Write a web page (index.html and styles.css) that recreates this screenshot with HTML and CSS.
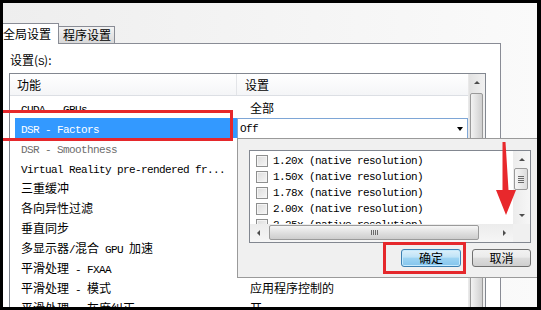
FILE: index.html
```html
<!DOCTYPE html>
<html lang="zh-CN">
<head>
  <meta charset="UTF-8">
  <link rel="stylesheet" href="styles.css">
  <title>管理 3D 设置</title>
</head>
<body>
  <div class="window">
    <div class="tabs">
      <div class="tab active">全局设置</div>
      <div class="tab">程序设置</div>
    </div>

    <div class="panel">
      <div class="field-label">设置(<span class="m">S</span>):</div>
      <div class="listbox">
        <div class="list-main">
          <div class="list-head">
            <div class="head-a">功能</div>
            <div class="head-b">设置</div>
          </div>
          <div class="rows">
            <div class="row"><div class="col-a"><span class="m">CUDA - GPUs</span></div><div class="col-b">全部</div></div>
            <div class="row selected">
              <div class="col-a"><span class="m">DSR - Factors</span></div>
              <div class="combo"><span class="m">Off</span><span class="combo-arrow"></span></div>
            </div>
            <div class="row muted"><div class="col-a"><span class="m">DSR - Smoothness</span></div><div class="col-b"></div></div>
            <div class="row"><div class="col-a"><span class="m">Virtual Reality pre-rendered fr...</span></div><div class="col-b"></div></div>
            <div class="row"><div class="col-a">三重缓冲</div><div class="col-b">关</div></div>
            <div class="row"><div class="col-a">各向异性过滤</div><div class="col-b">应用程序控制的</div></div>
            <div class="row"><div class="col-a">垂直同步</div><div class="col-b">使用 3D 应用程序设置</div></div>
            <div class="row"><div class="col-a">多显示器<span class="m">/</span>混合<span class="m"> GPU </span>加速</div><div class="col-b">多显示器性能模式</div></div>
            <div class="row"><div class="col-a">平滑处理<span class="m"> - FXAA</span></div><div class="col-b">关</div></div>
            <div class="row"><div class="col-a">平滑处理<span class="m"> - </span>模式</div><div class="col-b">应用程序控制的</div></div>
            <div class="row"><div class="col-a">平滑处理<span class="m"> - </span>灰度纠正</div><div class="col-b">开</div></div>
          </div>
        </div>
        <div class="vscroll">
          <div class="sb-btn"><span class="tri up"></span></div>
          <div class="sb-thumb"></div>
        </div>
      </div>
    </div>

    <div class="popup">
      <div class="check-list">
        <div class="items">
          <label class="item"><span class="box"></span><span class="m">1.20x (native resolution)</span></label>
          <label class="item"><span class="box"></span><span class="m">1.50x (native resolution)</span></label>
          <label class="item"><span class="box"></span><span class="m">1.78x (native resolution)</span></label>
          <label class="item"><span class="box"></span><span class="m">2.00x (native resolution)</span></label>
          <label class="item"><span class="box"></span><span class="m">2.25x (native resolution)</span></label>
        </div>
        <div class="vbar">
          <div class="sb-btn"><span class="tri up"></span></div>
          <div class="vbar-track"><div class="vbar-thumb"><span class="grip-h"></span></div></div>
          <div class="sb-btn"><span class="tri down"></span></div>
        </div>
        <div class="hbar">
          <div class="hbar-btn"><span class="tri left"></span></div>
          <div class="hbar-thumb"><span class="grip-v"></span></div>
          <div class="hbar-btn"><span class="tri right"></span></div>
        </div>
        <div class="corner"></div>
      </div>
      <div class="buttons">
        <button class="btn btn-default">确定</button>
        <button class="btn">取消</button>
      </div>
    </div>

    <div class="mark mark-row"></div>
    <div class="mark mark-ok"></div>
    <svg class="arrow" width="26" height="78" viewBox="0 0 26 78">
      <polygon points="9.5,2 12.5,2 15.5,50 23,50 13,75 3,50 9.5,50" fill="#e8282c"/>
    </svg>
  </div>
</body>
</html>
```

FILE: styles.css
```css
body {
  margin: 0;
  width: 541px;
  height: 310px;
  overflow: hidden;
  background-color: #000;
}

.window {
  position: relative;
  margin: 3px 4px 0 3px;
  height: 304px;
  overflow: hidden;
  display: flex;
  flex-direction: column;
  background: linear-gradient(to right, #eeeeee, #fafafa);
  font-family: "Noto Sans CJK SC", sans-serif;
  font-size: 12px;
  color: #000;
}

/* Latin text in the old bitmap style: 6px per char */
.m {
  font-family: "Liberation Mono", monospace;
  font-size: 11px;
  letter-spacing: -0.6px;
  white-space: pre;
}

.tabs {
  display: flex;
  align-items: flex-end;
  height: 40px;
  flex-shrink: 0;
}

.tab {
  box-sizing: border-box;
  width: 56px;
  height: 17px;
  line-height: 15px;
  padding-left: 4px;
  border: 1px solid #898c95;
  border-left: none;
  border-bottom: none;
  background: linear-gradient(#f3f3f3, #e6e6e6 50%, #d8d8d8);
}

.tab.active {
  position: relative;
  z-index: 1;
  height: 21px;
  margin-bottom: -1px;
  line-height: 19px;
  padding-left: 0;
  background: #fff;
}

.panel {
  box-sizing: border-box;
  width: 498px;
  flex: 1;
  display: flex;
  flex-direction: column;
  padding: 8px 0 0 6px;
  background-color: #fff;
  border-top: 1px solid #898c95;
  border-right: 1px solid #898c95;
}

.field-label {
  height: 16px;
  line-height: 16px;
  margin: 0 0 5px 1px;
}

.listbox {
  box-sizing: border-box;
  width: 477px;
  flex: 1;
  display: grid;
  grid-template-columns: 1fr 17px;
  border: 1px solid #828790;
  border-bottom: none;
}

.list-head {
  box-sizing: border-box;
  height: 22px;
  display: flex;
  background: linear-gradient(#ffffff, #f4f5f7);
  border-bottom: 1px solid #dcdfe4;
}

.head-a {
  box-sizing: border-box;
  width: 227px;
  padding-left: 7px;
  line-height: 21px;
  border-right: 1px solid #e3e5e8;
}

.head-b {
  padding-left: 8px;
  line-height: 21px;
}

.rows {
  padding-top: 2px;
}

.row {
  display: flex;
  height: 20px;
  line-height: 20px;
  margin-left: 5px;
  white-space: nowrap;
}

.col-a {
  box-sizing: border-box;
  width: 222px;
  padding-left: 6px;
  overflow: hidden;
}

.col-b {
  padding-left: 13px;
}

.row.selected .col-a {
  background-color: #3399ff;
  color: #fff;
}

.row.muted {
  color: #6d6d6d;
}

.combo {
  box-sizing: border-box;
  flex: 1;
  display: flex;
  align-items: center;
  justify-content: space-between;
  padding: 0 4px 0 2px;
  background-color: #fff;
  border: 1px solid #7ea6d6;
  border-bottom: none;
  line-height: 18px;
}

.combo-arrow {
  border-top: 4px solid #000;
  border-left: 3px solid transparent;
  border-right: 3px solid transparent;
}

.vscroll {
  display: flex;
  flex-direction: column;
  background: linear-gradient(to right, #e2e2e2, #f1f1f1);
  border-left: 1px solid #e9e9e9;
}

.sb-btn {
  height: 17px;
  flex-shrink: 0;
  display: flex;
  align-items: center;
  justify-content: center;
}

.tri {
  width: 0;
  height: 0;
}

.tri.up {
  border-bottom: 3px solid #4d4d4d;
  border-left: 3px solid transparent;
  border-right: 3px solid transparent;
}

.tri.down {
  border-top: 3px solid #4d4d4d;
  border-left: 3px solid transparent;
  border-right: 3px solid transparent;
}

.tri.left {
  border-right: 3px solid #4d4d4d;
  border-top: 3px solid transparent;
  border-bottom: 3px solid transparent;
}

.tri.right {
  border-left: 3px solid #4d4d4d;
  border-top: 3px solid transparent;
  border-bottom: 3px solid transparent;
}

.sb-thumb {
  flex: 1;
  margin: 2px 2px 0 1px;
  border: 1px solid #9a9a9a;
  border-radius: 2px;
  background: linear-gradient(to right, #f3f3f3, #dedede 60%, #cfcfcf);
}

/* dropdown of the DSR factors */
.popup {
  position: absolute;
  left: 234px;
  top: 135px;
  box-sizing: border-box;
  width: 300px;
  height: 140px;
  padding: 11px 0 0 11px;
  background-color: #f0f0f0;
  border: 1px solid #9a9a9a;
  border-right: none;
  z-index: 2;
}

.check-list {
  box-sizing: border-box;
  width: 282px;
  height: 93px;
  display: grid;
  grid-template-columns: 1fr 17px;
  grid-template-rows: 1fr 18px;
  border: 1px solid #828790;
  background-color: #fff;
}

.items {
  overflow: hidden;
  padding-top: 2px;
}

.item {
  display: flex;
  align-items: center;
  height: 16px;
  padding-left: 6px;
}

.box {
  box-sizing: border-box;
  width: 12px;
  height: 12px;
  margin-right: 5px;
  border: 1px solid #8e8f8f;
  background: linear-gradient(135deg, #dcdcdc, #f6f6f6);
  box-shadow: inset 0 0 0 1px #f4f4f4;
}

.vbar {
  display: flex;
  flex-direction: column;
  background: linear-gradient(to right, #ececec, #f6f6f6);
}

.vbar-track {
  flex: 1;
}

.vbar-thumb {
  box-sizing: border-box;
  height: 22px;
  margin: 0 2px 0 1px;
  display: flex;
  align-items: center;
  justify-content: center;
  border: 1px solid #9a9a9a;
  border-radius: 2px;
  background: linear-gradient(to right, #f6f6f6, #dcdcdc);
}

.grip-h {
  width: 6px;
  height: 7px;
  background: repeating-linear-gradient(#6a6a6a 0 1px, transparent 1px 2px);
}

.hbar {
  display: flex;
  align-items: stretch;
  background: linear-gradient(#ececec, #f6f6f6);
}

.hbar-btn {
  width: 17px;
  display: flex;
  align-items: center;
  justify-content: center;
}

.hbar-thumb {
  box-sizing: border-box;
  width: 210px;
  margin: 1px 0 2px 2px;
  display: flex;
  align-items: center;
  justify-content: center;
  border: 1px solid #9a9a9a;
  border-radius: 2px;
  background: linear-gradient(#f6f6f6, #dedede 55%, #cdcdcd);
}

.hbar-thumb + .hbar-btn {
  margin-left: auto;
}

.grip-v {
  width: 7px;
  height: 5px;
  background: repeating-linear-gradient(to right, #6a6a6a 0 1px, transparent 1px 2px);
}

.corner {
  background-color: #f0f0f0;
}

.buttons {
  width: 282px;
  display: flex;
  justify-content: flex-end;
  gap: 11px;
  margin-top: 6px;
}

.btn {
  box-sizing: border-box;
  width: 59px;
  height: 18px;
  padding: 0;
  font-family: "Noto Sans CJK SC", sans-serif;
  font-size: 12px;
  line-height: 16px;
  color: #000;
  border: 1px solid #707070;
  border-radius: 3px;
  background: linear-gradient(#f2f2f2, #ebebeb 45%, #dddddd 50%, #cfcfcf);
}

.btn-default {
  width: 60px;
  border-color: #3c7fb1;
  background: linear-gradient(#dcf0fb, #bfe3f7 45%, #9dd4f3 50%, #84c4ec);
  box-shadow: inset 0 0 0 1px #c6eafd;
}

/* red highlight marks drawn over the dialog */
.mark {
  position: absolute;
  box-sizing: border-box;
  border: 3px solid #e5282c;
  z-index: 3;
}

.mark-row {
  left: -4px;
  top: 107px;
  width: 234px;
  height: 31px;
}

.mark-ok {
  left: 380px;
  top: 239px;
  width: 83px;
  height: 32px;
}

.arrow {
  position: absolute;
  left: 490px;
  top: 137px;
  z-index: 3;
}
```
